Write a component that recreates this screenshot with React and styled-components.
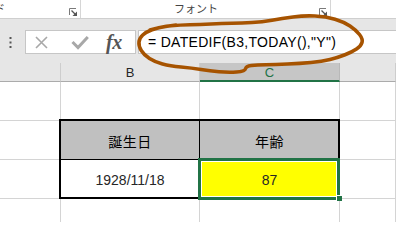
import React from "react";
import styled, { createGlobalStyle, css } from "styled-components";

const Global = createGlobalStyle`
  html, body { margin: 0; padding: 0; overflow: hidden; background: #fff; }
  #root { width: 396px; height: 222px; }
`;

const Page = styled.div`
  position: relative;
  width: 396px;
  height: 222px;
  overflow: hidden;
  font-family: "Liberation Sans", Arial, sans-serif;
  background: #fff;
`;

/* ---------- Ribbon ---------- */
const Ribbon = styled.div`
  display: flex;
  height: 18px;
  background: #fff;
  border-bottom: 1px solid #cfcfcf;
`;

const Group = styled.div`
  display: flex;
  align-items: flex-end;
  box-sizing: border-box;
  width: ${(p) => (p.$w ? `${p.$w}px` : "auto")};
  flex: ${(p) => (p.$w ? "none" : "1")};
  overflow: hidden;
  padding-bottom: 2px;
  border-right: ${(p) => (p.$sep ? "1px solid #d6d6d6" : "none")};
`;

const GroupLabel = styled.div`
  align-self: flex-start;
  flex: none;
  width: ${(p) => (p.$lw ? `${p.$lw}px` : "auto")};
  margin-left: ${(p) => p.$ml || 0}px;
  text-align: center;
  font-family: "Noto Sans CJK JP", sans-serif;
  font-size: 11px;
  line-height: 16px;
  color: #444;
  white-space: nowrap;
`;

const Spacer = styled.div`
  flex: 1;
`;

const LauncherBox = styled.div`
  display: flex;
  width: 8px;
  height: 8px;
  margin-left: ${(p) => p.$ml || 0}px;
  margin-right: 3px;
`;

const Launcher = ({ ml }) => (
  <LauncherBox $ml={ml}>
    <svg width="8" height="8" viewBox="0 0 8 8">
      <path d="M0.5 7 V0.5 H7" stroke="#7a7a7a" strokeWidth="1" fill="none" />
      <path d="M2.5 2.5 L6.5 6.5" stroke="#555" strokeWidth="1.2" />
      <path d="M8 3.5 V8 H3.5 Z" fill="#555" />
    </svg>
  </LauncherBox>
);

/* ---------- Formula bar ---------- */
const FormulaBar = styled.div`
  display: flex;
  align-items: stretch;
  height: 44px;
  box-sizing: border-box;
  padding: 11px 0 9px 0;
  background: #e6e6e6;
`;

const Grip = styled.div`
  display: flex;
  align-items: center;
  width: 25px;
  padding-left: 9px;
  box-sizing: border-box;
`;

const ButtonsBox = styled.div`
  display: flex;
  align-items: center;
  box-sizing: border-box;
  width: 111px;
  background: #fff;
  border: 1px solid #c6c6c6;
`;

const IconSlot = styled.div`
  display: flex;
  align-items: center;
  justify-content: center;
  margin-left: ${(p) => p.$ml}px;
`;

const Fx = styled.span`
  font-family: "Liberation Serif", "DejaVu Serif", serif;
  font-style: italic;
  font-weight: bold;
  font-size: 20px;
  line-height: 20px;
  color: #555;
  letter-spacing: -0.5px;
`;

const FormulaInput = styled.div`
  flex: 1;
  display: flex;
  align-items: center;
  margin-left: 2px;
  padding-left: 9px;
  box-sizing: border-box;
  background: #fff;
  border: 1px solid #c6c6c6;
  border-right: none;
  font-family: "Liberation Sans", Arial, sans-serif;
  font-size: 14px;
  letter-spacing: 0.3px;
  color: #000;
  white-space: nowrap;
`;

/* ---------- Sheet ---------- */
const Sheet = styled.div`
  display: grid;
  grid-template-columns: 61px 139px 140px 1fr;
`;

const ColHeader = styled.div`
  box-sizing: border-box;
  height: 19px;
  padding-top: 1px;
  display: flex;
  align-items: center;
  justify-content: center;
  background: ${(p) => (p.$active ? "#c6c6c6" : "#e6e6e6")};
  border-right: 1px solid ${(p) => (p.$active ? "#b8b8b8" : "#cdcdcd")};
  border-bottom: ${(p) => (p.$active ? "2px solid #217346" : "1px solid #ababab")};
  font-family: "Liberation Sans", Arial, sans-serif;
  font-size: 13px;
  color: ${(p) => (p.$active ? "#217346" : "#262626")};
`;

const Cell = styled.div`
  position: relative;
  box-sizing: border-box;
  height: 39px;
  display: flex;
  align-items: center;
  justify-content: center;
  padding-top: 1px;
  background: ${(p) => p.$bg || "#fff"};
  border-right: 1px solid #d4d4d4;
  border-bottom: 1px solid #d4d4d4;
  font-family: ${(p) =>
    p.$cjk
      ? `"Noto Sans CJK JP", sans-serif`
      : `"Liberation Sans", Arial, sans-serif`};
  font-size: 14px;
  letter-spacing: ${(p) => (p.$cjk ? "0.5px" : "0")};
  color: ${(p) => (p.$cjk ? "#000" : "#262626")};

  ${(p) =>
    p.$edges &&
    css`
      &::after {
        content: "";
        position: absolute;
        z-index: 1;
        pointer-events: none;
        top: ${p.$edges.t === 2 ? -2 : -1}px;
        left: ${p.$edges.l === 2 ? -2 : -1}px;
        right: -1px;
        bottom: -1px;
        border-style: solid;
        border-color: #000;
        border-width: ${p.$edges.t || 0}px ${p.$edges.r || 0}px
          ${p.$edges.b || 0}px ${p.$edges.l || 0}px;
      }
    `}

  ${(p) =>
    p.$selected &&
    css`
      &::before {
        content: "";
        position: absolute;
        z-index: 2;
        pointer-events: none;
        top: -2px;
        left: -2px;
        right: -1px;
        bottom: -2px;
        border: 3px solid #217346;
        box-shadow: inset 0 0 0 1px #fff;
      }
    `}
`;

const CellText = styled.span`
  position: relative;
  z-index: 3;
`;

const Handle = styled.div`
  position: absolute;
  z-index: 4;
  right: -3px;
  bottom: -3px;
  width: 6px;
  height: 6px;
  box-sizing: border-box;
  background: #217346;
  border-left: 1px solid #fff;
  border-top: 1px solid #fff;
`;

/* ---------- Annotation ---------- */
const Annotation = styled.svg`
  position: absolute;
  left: 0;
  top: 0;
  z-index: 10;
  pointer-events: none;
`;

const ellipsePts = [
  [150, 30], [162, 26.5], [180, 25], [200, 24.5], [222, 23.5], [242, 23],
  [262, 22], [282, 18.5], [304, 15.5], [326, 16.5], [344, 22], [356, 30],
  [363, 39], [361, 46], [352, 52], [338, 57.5], [322, 61.5], [300, 63.5],
  [275, 64.5], [257, 65], [246, 66], [245, 71.5], [228, 72.5], [210, 71],
  [192, 68], [170, 66], [155, 62], [144, 55], [138.5, 46], [139.5, 38],
  [146, 32], [158, 27.5], [176, 25],
];

const ellipsePath = (() => {
  const p = ellipsePts;
  let d = `M${p[0][0]} ${p[0][1]}`;
  for (let i = 1; i < p.length - 1; i++) {
    const mx = (p[i][0] + p[i + 1][0]) / 2;
    const my = (p[i][1] + p[i + 1][1]) / 2;
    d += ` Q${p[i][0]} ${p[i][1]} ${mx} ${my}`;
  }
  const last = p[p.length - 1];
  d += ` L${last[0]} ${last[1]}`;
  return d;
})();

const COLS = ["", "B", "C", ""];

export default function App() {
  return (
    <Page>
      <Global />
      <Ribbon>
        <Group $w={81} $sep>
          <GroupLabel $ml={-6}>ド</GroupLabel>
          <Spacer />
          <Launcher />
        </Group>
        <Group $w={250} $sep>
          <GroupLabel $lw={230}>フォント</GroupLabel>
          <Launcher ml={8} />
        </Group>
        <Group />
      </Ribbon>

      <FormulaBar>
        <Grip>
          <svg width="3" height="11" viewBox="0 0 3 11">
            <rect x="0.5" y="0" width="2" height="2" fill="#555" />
            <rect x="0.5" y="4.5" width="2" height="2" fill="#555" />
            <rect x="0.5" y="9" width="2" height="2" fill="#555" />
          </svg>
        </Grip>
        <ButtonsBox>
          <IconSlot $ml={9}>
            <svg width="13" height="13" viewBox="0 0 13 13">
              <path d="M1 1 L12 12 M12 1 L1 12" stroke="#a8a8a8" strokeWidth="1.6" />
            </svg>
          </IconSlot>
          <IconSlot $ml={23}>
            <svg width="18" height="15" viewBox="0 0 18 15">
              <path
                d="M1.5 7 L7 12.5 L16.8 2"
                stroke="#a8a8a8"
                strokeWidth="3"
                fill="none"
              />
            </svg>
          </IconSlot>
          <IconSlot $ml={17}>
            <Fx>fx</Fx>
          </IconSlot>
        </ButtonsBox>
        <FormulaInput>= DATEDIF(B3,TODAY(),"Y")</FormulaInput>
      </FormulaBar>

      <Sheet>
        {COLS.map((c, i) => (
          <ColHeader key={`h${i}`} $active={c === "C"}>
            {c}
          </ColHeader>
        ))}

        {/* row 1 */}
        <Cell />
        <Cell />
        <Cell />
        <Cell />

        {/* row 2 */}
        <Cell />
        <Cell $bg="#c0c0c0" $cjk $edges={{ t: 2, l: 2, r: 1, b: 1 }}>
          <CellText>誕生日</CellText>
        </Cell>
        <Cell $bg="#c0c0c0" $cjk $edges={{ t: 2, r: 2, b: 1 }}>
          <CellText>年齢</CellText>
        </Cell>
        <Cell />

        {/* row 3 */}
        <Cell />
        <Cell $edges={{ l: 2, r: 1, b: 2 }}>
          <CellText>1928/11/18</CellText>
        </Cell>
        <Cell $bg="#ffff00" $edges={{ r: 2, b: 2 }} $selected>
          <CellText>87</CellText>
          <Handle />
        </Cell>
        <Cell />

        {/* row 4 */}
        <Cell />
        <Cell />
        <Cell />
        <Cell />
      </Sheet>

      <Annotation width="396" height="222" viewBox="0 0 396 222">
        <path
          d={ellipsePath}
          fill="none"
          stroke="#a65300"
          strokeWidth="3.6"
          strokeLinejoin="round"
          strokeLinecap="round"
        />
      </Annotation>
    </Page>
  );
}
